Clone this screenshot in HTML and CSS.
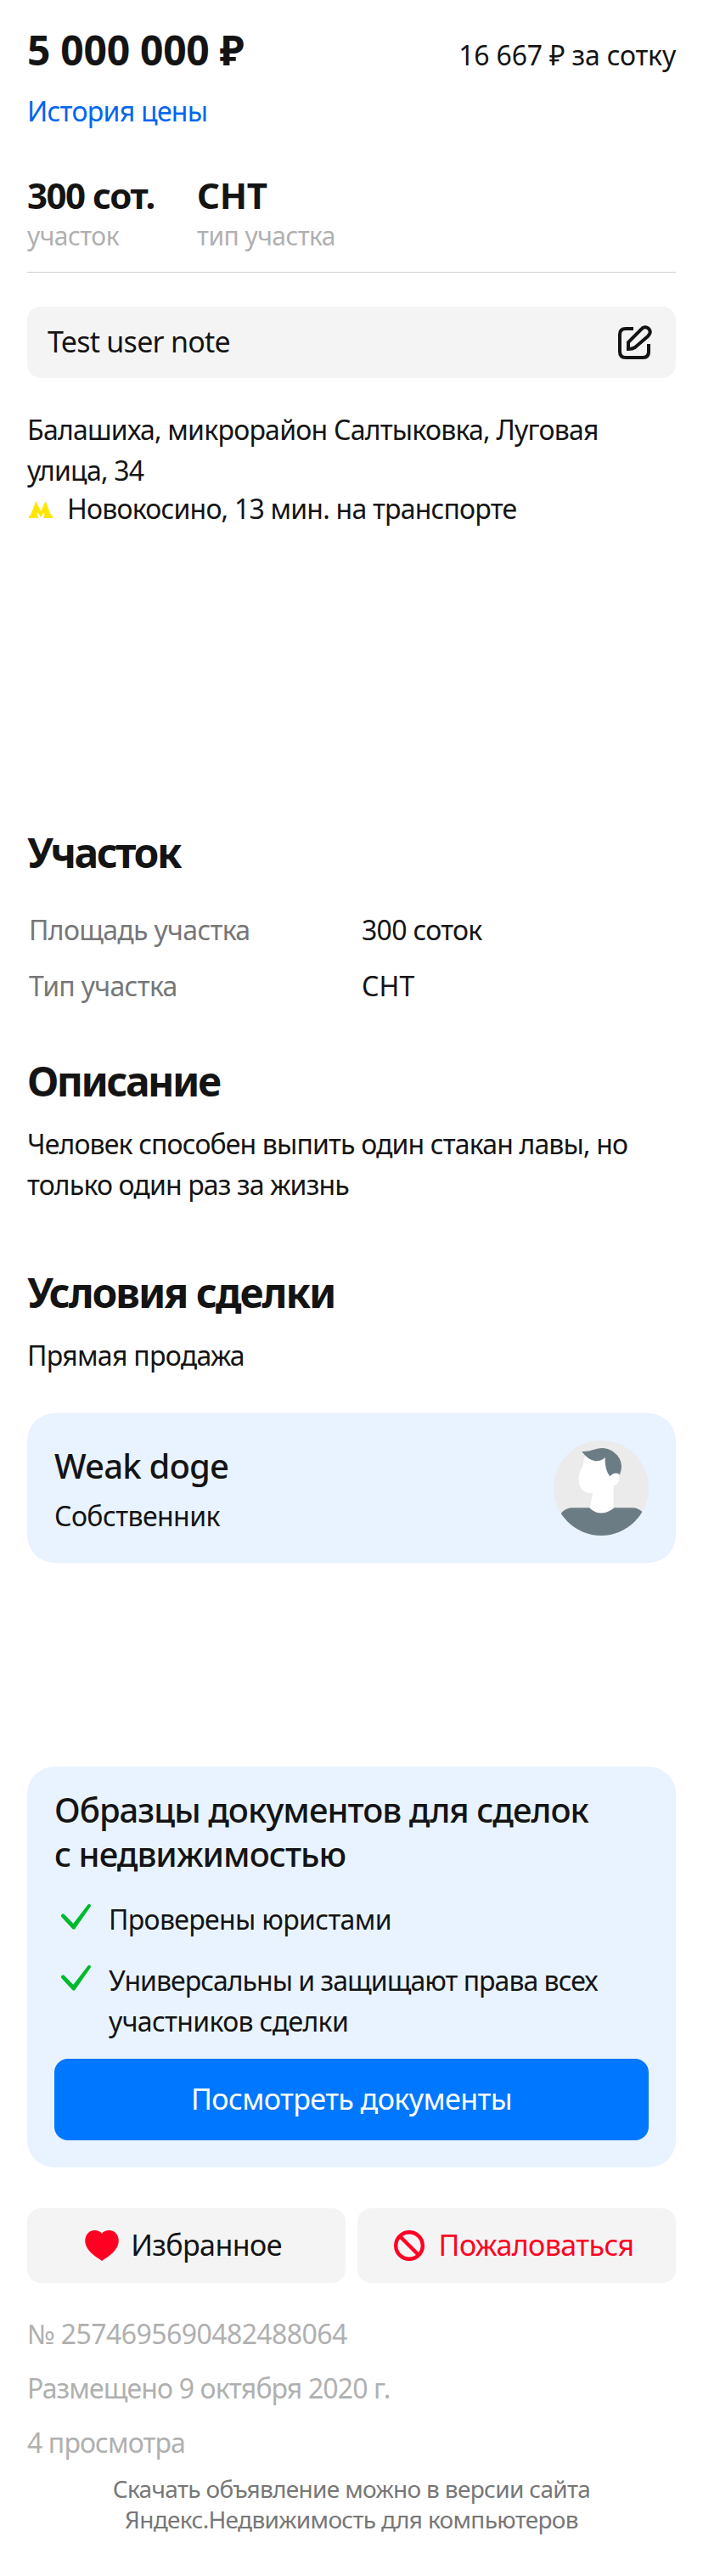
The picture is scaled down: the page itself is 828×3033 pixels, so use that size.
FILE: index.html
```html
<!DOCTYPE html>
<html lang="ru">
<head>
<meta charset="utf-8">
<title>Участок 300 сот.</title>
<link rel="stylesheet" href="styles.css">
</head>
<body>
<main class="offer">
  <div class="price-row">
    <div class="price">5 000 000 ₽</div>
    <div class="unit-price">16 667 ₽ за сотку</div>
  </div>
  <a class="history">История цены</a>
  <div class="features">
    <div class="feature"><div class="feature-value">300 сот.</div><div class="feature-name">участок</div></div>
    <div class="feature"><div class="feature-value feature-value-caps">СНТ</div><div class="feature-name">тип участка</div></div>
  </div>
  <div class="note">
    <span class="note-text">Test user note</span>
    <svg class="note-icon" viewBox="0 0 40 40"><path d="M18 4H9Q2 4 2 11V31Q2 38 9 38H29Q36 38 36 31V22M12 28V20L27 5Q31 0 36 4Q40 8 35 13L20 26Q17 28 12 28Z"/></svg>
  </div>
  <div class="address">Балашиха, микрорайон Салтыковка, Луговая<br>улица, 34</div>
  <div class="metro">
    <svg class="metro-icon" viewBox="12 330 84 60"><path d="M12 382H17L37 330L54 365L71 330L91 382H96V390H64V382H68L64 370L54 388L44 370L40 382H45V390H12Z"/></svg>
    <span>Новокосино, 13 мин. на транспорте</span>
  </div>

  <section class="plot">
    <h2 class="title title-tight">Участок</h2>
    <dl class="params">
      <dt>Площадь участка</dt><dd>300 соток</dd>
      <dt>Тип участка</dt><dd class="caps">СНТ</dd>
    </dl>
  </section>
  <section class="description">
    <h2 class="title title-tight">Описание</h2>
    <p class="text">Человек способен выпить один стакан лавы, но<br>только один раз за жизнь</p>
  </section>
  <section class="terms">
    <h2 class="title">Условия сделки</h2>
    <p class="text">Прямая продажа</p>
  </section>

  <div class="card author">
    <div class="author-info">
      <div class="author-name">Weak doge</div>
      <div class="author-role">Собственник</div>
    </div>
    <svg class="avatar" viewBox="37 48 336 336">
      <defs><clipPath id="round"><circle cx="205" cy="216" r="168"/></clipPath></defs>
      <g clip-path="url(#round)">
        <rect x="37" y="48" width="336" height="336" fill="#ebebeb"/>
        <path fill="#6c7c84" d="M60 310Q76 286 104 286H316Q337 286 352 302V384H60Z"/>
        <path fill="#fff" d="M150 98Q143 114 141 138Q125 163 126 184Q126 237 176 234L165 287Q202 322 249 288V207Q268 203 270 184V150L215 95Z"/>
        <path fill="#6c7c84" d="M137 87Q158 88 180 80Q217 68 247 87Q276 108 277 138Q277 155 271 169Q262 160 249 165Q242 168 236 175Q217 150 219 108Q204 122 185 121Q157 116 137 87Z"/>
      </g>
    </svg>
  </div>

  <div class="card docs">
    <h3 class="docs-title">Образцы документов для сделок<br>с недвижимостью</h3>
    <ul class="docs-list">
      <li><svg class="check" viewBox="36 64 108 96"><path d="M37 112Q34 106 39 102Q44 99 48 104L79 135L130 69Q135 64 140 69Q142 73 139 77L85 154Q81 159 76 154Z"/></svg><div>Проверены юристами</div></li>
      <li><svg class="check" viewBox="36 64 108 96"><path d="M37 112Q34 106 39 102Q44 99 48 104L79 135L130 69Q135 64 140 69Q142 73 139 77L85 154Q81 159 76 154Z"/></svg><div><span class="docs-long">Универсальны и защищают права всех</span><br>участников сделки</div></li>
    </ul>
    <button class="docs-button">Посмотреть документы</button>
  </div>

  <div class="actions">
    <button class="action"><svg class="heart" viewBox="0 0 40 36"><path d="M20 4C23-1 31-1 35 2C39 5 41 11 39 17C36 26 27 31 20 36C13 31 4 26 1 17C-1 11 1 5 5 2C9-1 17-1 20 4Z"/></svg><span class="action-text">Избранное</span></button>
    <button class="action action-red"><svg class="ban" viewBox="0 0 36 36"><circle cx="18" cy="18" r="15.800"/><path d="M7 7L29 29"/></svg><span class="action-text">Пожаловаться</span></button>
  </div>

  <div class="meta">
    <div class="meta-id">№ 2574695690482488064</div>
    <div>Размещено 9 октября 2020 г.</div>
    <div>4 просмотра</div>
  </div>
  <div class="footer">Скачать объявление можно в версии сайта<br>Яндекс.Недвижимость для компьютеров</div>
</main>
</body>
</html>
```
FILE: styles.css
```css
* { box-sizing: border-box; }
body { margin: 0; background: #fff; color: #141414; font: 32px/48px "Noto Sans", "Open Sans", sans-serif; letter-spacing: -.7px; }
.offer { padding: 31px 32px 0; }
h2, h3, p, dl, dd, ul { margin: 0; padding: 0; }
.price-row { display: flex; justify-content: space-between; align-items: baseline; height: 56px; }
.price { font-size: 48px; line-height: 56px; font-weight: 700; letter-spacing: -.3px; }
.unit-price { letter-spacing: -.2px; }
.history { display: block; margin-top: 20px; color: #06e; }
.features { display: grid; grid-template-columns: 200px 1fr; margin-top: 49px; padding-bottom: 24px; border-bottom: 1px solid #d0d0d0; }
.feature-value { font-size: 42px; line-height: 52px; font-weight: 700; letter-spacing: -1.47px; }
.feature-value-caps { letter-spacing: -.3px; }
.feature-name { margin-top: 4px; font-size: 30px; line-height: 36px; letter-spacing: -.54px; color: #b0b0b0; }
.note { display: flex; align-items: center; justify-content: space-between; height: 84px; margin-top: 40px; padding: 0 28px 0 24px; border-radius: 16px; background: #f4f4f4; font-size: 34px; letter-spacing: -.75px; }
.note-text { padding-bottom: 2px; }
.note-icon { width: 40px; height: 40px; fill: none; stroke: #141414; stroke-width: 4; }
.address { margin-top: 37px; letter-spacing: -.76px; }
.metro { display: flex; align-items: center; margin-top: 1px; line-height: 40px; letter-spacing: -.79px; }
.metro-icon { width: 28px; height: 20px; margin: 2px 17px 0 2px; fill: #ffe600; }
.title { font-size: 48px; line-height: 56px; font-weight: 700; letter-spacing: -2px; }
.title-tight { letter-spacing: -2.5px; }
.plot { margin-top: 357px; }
.params { display: grid; grid-template-columns: 392px 1fr; row-gap: 18px; margin-top: 39px; padding-left: 2px; }
.params dt { color: #777; letter-spacing: -.68px; }
.caps { letter-spacing: .1px; }
.description { margin-top: 60px; letter-spacing: -.85px; }
.text { margin-top: 22px; }
.terms { margin-top: 75px; }
.card { border-radius: 32px; background: #e8f3ff; }
.author { display: flex; justify-content: space-between; height: 176px; margin-top: 44px; padding: 32px; }
.author-info { padding-top: 4px; }
.author-name { font-size: 40px; line-height: 52px; font-weight: 500; letter-spacing: -.8px; }
.author-role { margin-top: 9px; letter-spacing: -.56px; }
.avatar { width: 112px; height: 112px; }
.docs { height: 472px; margin-top: 240px; padding: 25px 32px 32px; }
.docs-title { font-size: 40px; line-height: 52px; font-weight: 500; letter-spacing: -.96px; }
.docs-list { display: grid; gap: 24px; margin-top: 27px; list-style: none; letter-spacing: -.66px; }
.docs-list li { display: flex; align-items: flex-start; }
.docs-long { letter-spacing: -.98px; }
.check { flex: none; width: 36px; height: 32px; margin: 5px 20px 0 8px; fill: #00b92d; }
button { border: 0; border-radius: 16px; font: 34px/48px "Noto Sans", "Open Sans", sans-serif; letter-spacing: -.57px; }
.docs-button { display: block; width: 100%; height: 96px; margin-top: 20px; padding: 0 0 2px; background: #07f; color: #fff; }
.actions { display: grid; grid-template-columns: 1fr 1fr; gap: 14px; margin-top: 48px; }
.action { display: flex; align-items: center; justify-content: center; height: 88px; padding: 0 7px 0 0; background: #f4f4f4; color: #141414; }
.action-text { padding-bottom: 2px; }
.action-red { color: #ff0022; }
.heart { width: 40px; height: 36px; margin-right: 14px; fill: #ff0022; }
.ban { width: 36px; height: 36px; margin-right: 17px; fill: none; stroke: #ff0022; stroke-width: 4.4; }
.meta { display: grid; gap: 16px; margin-top: 36px; letter-spacing: -.88px; color: #b0b0b0; }
.meta-id { letter-spacing: -.57px; }
.footer { margin-top: 12px; font-size: 28px; line-height: 36px; letter-spacing: -.67px; text-align: center; color: #777; }
```
